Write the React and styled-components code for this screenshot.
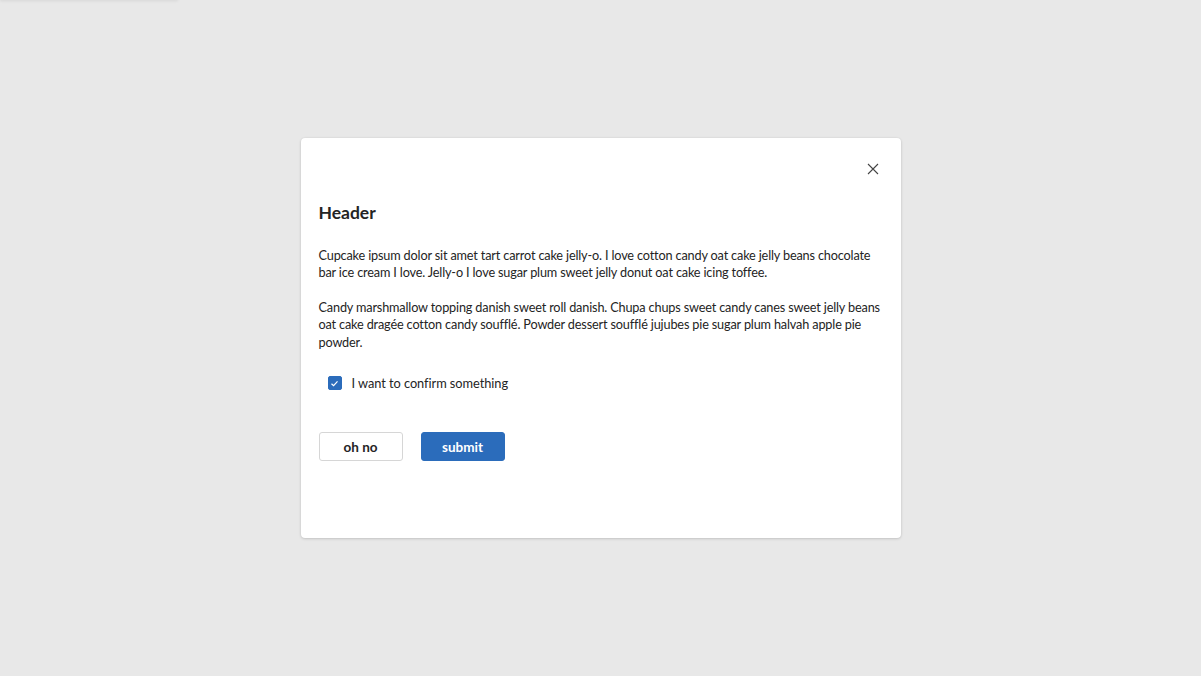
import React, { useState } from "react";
import styled, { createGlobalStyle } from "styled-components";

const Global = createGlobalStyle`
  html, body { margin: 0; padding: 0; height: 100%; }
  body { background: #e8e8e8; font-family: "Lato", "Noto Sans", sans-serif; color: #242424; }
  #root { height: 100%; }
`;

const Page = styled.div`
  position: relative;
  width: 1201px;
  height: 676px;
  display: flex;
  align-items: center;
  justify-content: center;
  background: #e8e8e8;
  box-sizing: border-box;
  padding-bottom: 1px;
  overflow: hidden;
`;

const GhostBar = styled.div`
  position: absolute;
  left: 0;
  top: -30px;
  width: 178px;
  height: 30px;
  background: #e8e8e8;
  box-shadow: 0 1px 3px rgba(0, 0, 0, 0.08);
`;

const Dialog = styled.div`
  width: 600px;
  height: 400px;
  box-sizing: border-box;
  background: #fff;
  border-radius: 4px;
  box-shadow: 0 1px 3px rgba(0,0,0,0.14), 0 0 2px rgba(0,0,0,0.08);
  padding: 23px 18px 18px 18px;
  display: flex;
  flex-direction: column;
`;

const TopBar = styled.div`
  display: flex;
  justify-content: flex-end;
  height: 18px;
`;

const CloseButton = styled.button`
  border: none;
  background: transparent;
  padding: 0;
  margin-right: 3px;
  margin-top: 1px;
  width: 14px;
  height: 14px;
  display: flex;
  align-items: center;
  justify-content: center;
  cursor: pointer;
`;

const Title = styled.h2`
  margin: 23px 0 0 0;
  font-size: 17.5px;
  font-weight: 700;
  line-height: 22px;
`;

const Para = styled.p`
  margin: ${(p) => (p.$first ? "23px" : "17px")} 0 0 0;
  font-size: 12.7px;
  letter-spacing: -0.16px;
  line-height: 17.5px;
  white-space: nowrap;
`;

const CheckRow = styled.label`
  display: flex;
  align-items: center;
  gap: 10px;
  margin: 24px 0 0 9px;
  font-size: 12.8px;
  letter-spacing: -0.05px;
  cursor: pointer;
`;

const Box = styled.span`
  width: 14px;
  height: 14px;
  border-radius: 2px;
  background: ${(p) => (p.$checked ? "#2b6cbb" : "#fff")};
  border: 1px solid ${(p) => (p.$checked ? "#2b6cbb" : "#666")};
  box-sizing: border-box;
  display: flex;
  align-items: center;
  justify-content: center;
`;

const Actions = styled.div`
  display: flex;
  gap: 18px;
  margin-top: 41px;
`;

const Button = styled.button`
  width: 84px;
  height: 29px;
  box-sizing: border-box;
  border-radius: 3px;
  font-family: inherit;
  font-size: 13.5px;
  font-weight: 700;
  cursor: pointer;
  border: 1px solid ${(p) => (p.$primary ? "#2b6cbb" : "#d6d6d6")};
  background: ${(p) => (p.$primary ? "#2b6cbb" : "#fff")};
  color: ${(p) => (p.$primary ? "#fff" : "#242424")};
`;

export default function App() {
  const [checked, setChecked] = useState(true);
  return (
    <Page>
      <Global />
      <GhostBar />
      <Dialog>
        <TopBar>
          <CloseButton aria-label="close">
            <svg width="12" height="12" viewBox="0 0 12 12">
              <path d="M1 1L11 11M11 1L1 11" stroke="#444" strokeWidth="1.1" />
            </svg>
          </CloseButton>
        </TopBar>
        <Title>Header</Title>
        <Para $first>
          Cupcake ipsum dolor sit amet tart carrot cake jelly-o. I love cotton candy oat cake jelly beans chocolate
          <br />
          bar ice cream I love. Jelly-o I love sugar plum sweet jelly donut oat cake icing toffee.
        </Para>
        <Para>
          Candy marshmallow topping danish sweet roll danish. Chupa chups sweet candy canes sweet jelly beans
          <br />
          oat cake dragée cotton candy soufflé. Powder dessert soufflé jujubes pie sugar plum halvah apple pie
          <br />
          powder.
        </Para>
        <CheckRow onClick={() => setChecked(!checked)}>
          <Box $checked={checked}>
            {checked && (
              <svg width="9" height="9" viewBox="0 0 9 9">
                <path d="M1.5 4.7L3.6 6.6L7.5 2.4" fill="none" stroke="#fff" strokeWidth="1.2" />
              </svg>
            )}
          </Box>
          I want to confirm something
        </CheckRow>
        <Actions>
          <Button>oh no</Button>
          <Button $primary>submit</Button>
        </Actions>
      </Dialog>
    </Page>
  );
}
